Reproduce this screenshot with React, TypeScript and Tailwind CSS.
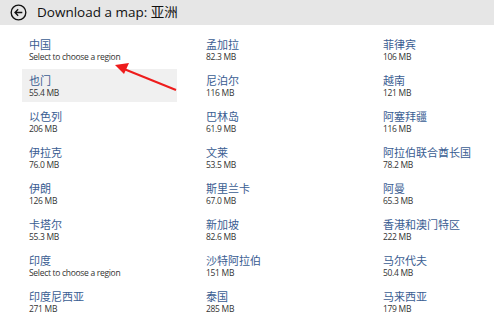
const regions: { name: string; size: string }[] = [
  { name: "中国", size: "Select to choose a region" },
  { name: "孟加拉", size: "82.3 MB" },
  { name: "菲律宾", size: "106 MB" },
  { name: "也门", size: "55.4 MB" },
  { name: "尼泊尔", size: "116 MB" },
  { name: "越南", size: "121 MB" },
  { name: "以色列", size: "206 MB" },
  { name: "巴林岛", size: "61.9 MB" },
  { name: "阿塞拜疆", size: "116 MB" },
  { name: "伊拉克", size: "76.0 MB" },
  { name: "文莱", size: "53.5 MB" },
  { name: "阿拉伯联合酋长国", size: "78.2 MB" },
  { name: "伊朗", size: "126 MB" },
  { name: "斯里兰卡", size: "67.0 MB" },
  { name: "阿曼", size: "65.3 MB" },
  { name: "卡塔尔", size: "55.3 MB" },
  { name: "新加坡", size: "82.6 MB" },
  { name: "香港和澳门特区", size: "222 MB" },
  { name: "印度", size: "Select to choose a region" },
  { name: "沙特阿拉伯", size: "151 MB" },
  { name: "马尔代夫", size: "50.4 MB" },
  { name: "印度尼西亚", size: "271 MB" },
  { name: "泰国", size: "285 MB" },
  { name: "马来西亚", size: "179 MB" },
];

export default function App() {
  return (
    <div
      className="relative w-[494px] h-[325px] overflow-hidden bg-white"
      style={{ fontFamily: '"Open Sans", "Noto Sans CJK SC", sans-serif' }}
    >
      {/* Title bar */}
      <header className="flex items-center h-[25px] bg-[#e6e6e6] pl-[10px]">
        <svg width="17" height="17" viewBox="0 0 20 20" aria-hidden="true">
          <circle cx="10" cy="10" r="8.6" fill="none" stroke="#111" strokeWidth="1.6" />
          <path d="M14.5 10H6M9.6 6.3L5.9 10l3.7 3.7" fill="none" stroke="#111" strokeWidth="1.6" />
        </svg>
        <h1 className="ml-[10px] text-[13.5px] text-[#111] leading-none">
          Download a map: 亚洲
        </h1>
      </header>

      {/* Region grid */}
      <div className="grid grid-cols-[177px_177px_118px] gap-y-[3px] pl-[22px] pt-[8px]">
        {regions.map((r, i) => (
          <div
            key={r.name}
            className={`h-[33px] pl-[7px] pt-[5px] flex flex-col ${i === 3 ? "bg-[#f0f0f0] w-[155px]" : ""}`}
          >
            <span className="text-[11px] leading-[13px] text-[#3a5d92] whitespace-nowrap">{r.name}</span>
            <span className="text-[8.5px] leading-[11px] tracking-[-0.3px] text-[#333] whitespace-nowrap">
              {r.size}
            </span>
          </div>
        ))}
      </div>

      {/* Annotation arrow */}
      <svg className="absolute left-0 top-0 pointer-events-none" width="494" height="325" aria-hidden="true">
        <line x1="176" y1="90" x2="124" y2="69" stroke="#ee1c1c" strokeWidth="2" />
        <polygon points="115,65 129,63 124,74" fill="#ee1c1c" />
      </svg>
    </div>
  );
}
